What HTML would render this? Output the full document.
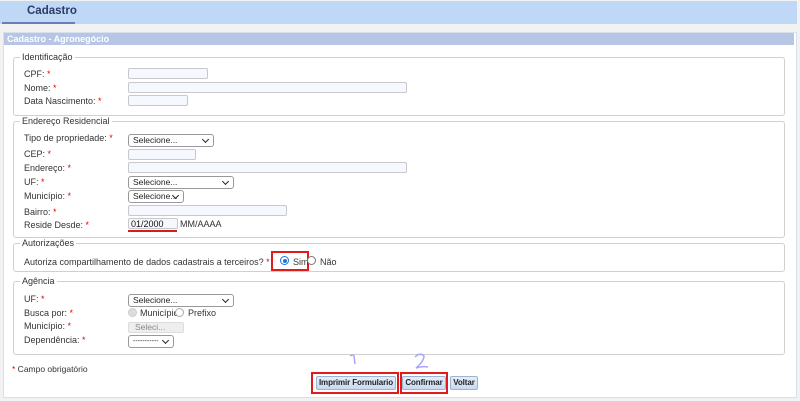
<!DOCTYPE html>
<html><head><meta charset="utf-8"><style>
*{box-sizing:border-box;margin:0;padding:0}
body{width:800px;height:401px;background:#f2f2f2;position:relative;overflow:hidden;font-family:"Liberation Sans",Arial,sans-serif;font-size:9px;color:#333}
.a{position:absolute;white-space:nowrap}
.hdr{left:0;top:1px;width:797px;height:23px;background:#bfd8f5}
.tab{left:27px;top:5px;font-size:11.5px;font-weight:bold;color:#2b3a6b}
.tabline{left:2px;top:22px;width:73px;height:2px;background:#6a7db8}
.panel{left:3px;top:32px;width:794px;height:366px;background:#fff;border:1px solid #d6e0ef}
.title{left:4px;top:33px;width:790px;height:12px;background:#b7c6e4;color:#fff;font-weight:bold;font-size:9px;line-height:12px;padding-left:3px}
.fs{border:1px solid #d0d0d0;border-radius:3px;left:13px;width:772px}
.lg{background:#fff;padding:0 2px;left:20px;font-size:9px;color:#333}
.lb{left:24px}
.r{color:#e00}
.in{border:1px solid #c8c8c8;border-radius:2px;background:#f5f8fe;height:11px}
.sel{border:1px solid #999;border-radius:3px;background:#fff;height:13px;font-size:8.5px;padding-left:4px;line-height:11px;color:#222;overflow:hidden}
.sel:after{content:"";position:absolute;right:5px;top:2px;width:4px;height:4px;border-right:1.5px solid #222;border-bottom:1.5px solid #222;transform:rotate(45deg)}
.btn{border:1px solid #9fb3cf;border-radius:2px;background:linear-gradient(#e4eefa,#c8daf2);font-weight:bold;font-size:8px;color:#222;height:14px;line-height:12px;text-align:center;letter-spacing:-0.1px}
.rb{border:2px solid #e01b1b}
.rad{width:9px;height:9px;border-radius:50%;border:1px solid #777;background:#fff}
</style></head><body>
<div class="a hdr"></div>
<div class="a tab">Cadastro</div>
<div class="a tabline"></div>
<div class="a panel"></div>
<div class="a title">Cadastro - Agronegócio</div>

<div class="a fs" style="top:57px;height:59px"></div>
<div class="a lg" style="top:52px">Identificação</div>
<div class="a lb" style="top:69px">CPF: <span class="r">*</span></div>
<div class="a lb" style="top:83px">Nome: <span class="r">*</span></div>
<div class="a lb" style="top:96px">Data Nascimento: <span class="r">*</span></div>
<div class="a in" style="left:128px;top:68px;width:80px"></div>
<div class="a in" style="left:128px;top:82px;width:279px"></div>
<div class="a in" style="left:128px;top:95px;width:60px"></div>

<div class="a fs" style="top:121px;height:117px"></div>
<div class="a lg" style="top:116px">Endereço Residencial</div>
<div class="a lb" style="top:133px">Tipo de propriedade: <span class="r">*</span></div>
<div class="a lb" style="top:149px">CEP: <span class="r">*</span></div>
<div class="a lb" style="top:163px">Endereço: <span class="r">*</span></div>
<div class="a lb" style="top:177px">UF: <span class="r">*</span></div>
<div class="a lb" style="top:191px">Município: <span class="r">*</span></div>
<div class="a lb" style="top:207px">Bairro: <span class="r">*</span></div>
<div class="a lb" style="top:220px">Reside Desde: <span class="r">*</span></div>
<div class="a sel" style="left:128px;top:134px;width:86px">Selecione...</div>
<div class="a in" style="left:128px;top:149px;width:68px"></div>
<div class="a in" style="left:128px;top:162px;width:279px"></div>
<div class="a sel" style="left:128px;top:176px;width:106px">Selecione...</div>
<div class="a sel" style="left:128px;top:190px;width:56px;padding-right:12px">Selecione...</div>
<div class="a in" style="left:128px;top:205px;width:159px"></div>
<div class="a in" style="left:128px;top:218px;width:50px;font-size:9px;padding-left:2px;line-height:10px;color:#111">01/2000</div>
<div class="a" style="left:128px;top:230px;width:49px;height:2px;background:#d61c1c"></div>
<div class="a" style="left:180px;top:219px">MM/AAAA</div>

<div class="a fs" style="top:243px;height:29px"></div>
<div class="a lg" style="top:238px">Autorizações</div>
<div class="a lb" style="top:257px">Autoriza compartilhamento de dados cadastrais a terceiros? <span class="r">*</span></div>
<div class="a rb" style="left:271px;top:251px;width:38px;height:20px"></div>
<div class="a rad" style="left:280px;top:256px;border-color:#1a73e8"><div style="margin:1.5px;width:4px;height:4px;border-radius:50%;background:#1a73e8"></div></div>
<div class="a" style="left:293px;top:257px">Sim</div>
<div class="a rad" style="left:307px;top:256px"></div>
<div class="a" style="left:320px;top:257px">Não</div>

<div class="a fs" style="top:281px;height:74px"></div>
<div class="a lg" style="top:276px">Agência</div>
<div class="a lb" style="top:294px">UF: <span class="r">*</span></div>
<div class="a lb" style="top:308px">Busca por: <span class="r">*</span></div>
<div class="a lb" style="top:321px">Município: <span class="r">*</span></div>
<div class="a lb" style="top:335px">Dependência: <span class="r">*</span></div>
<div class="a sel" style="left:128px;top:294px;width:106px">Selecione...</div>
<div class="a rad" style="left:128px;top:308px;background:#ddd;border-color:#ccc"></div>
<div class="a" style="left:140px;top:308px">Município</div>
<div class="a rad" style="left:175px;top:308px;border-color:#aaa"></div>
<div class="a" style="left:188px;top:308px">Prefixo</div>
<div class="a" style="left:128px;top:322px;width:56px;height:11px;background:#eee;border:1px solid #ddd;border-radius:2px;color:#888;padding-left:6px;line-height:9px;font-size:8.5px">Seleci...</div>
<div class="a sel" style="left:128px;top:335px;width:46px;font-size:7px">-----------</div>

<div class="a" style="left:12px;top:364px;font-size:8.5px"><span class="r">*</span> Campo obrigatório</div>
<svg class="a" style="left:340px;top:352px" width="100" height="22" viewBox="0 0 100 22">
<path d="M10 4 Q13 2 14 4 L15 12" fill="none" stroke="#a9a5ff" stroke-width="1.5"/>
<path d="M75 5 Q80 0 84 4 Q84 9 76 16 Q82 14 88 15" fill="none" stroke="#a9a5ff" stroke-width="1.5"/>
</svg>
<div class="a rb" style="left:311px;top:372px;width:88px;height:22px"></div>
<div class="a rb" style="left:400px;top:372px;width:48px;height:22px"></div>
<div class="a btn" style="left:316px;top:376px;width:80px">Imprimir Formulario</div>
<div class="a btn" style="left:402px;top:376px;width:44px">Confirmar</div>
<div class="a btn" style="left:450px;top:376px;width:28px">Voltar</div>
</body></html>
